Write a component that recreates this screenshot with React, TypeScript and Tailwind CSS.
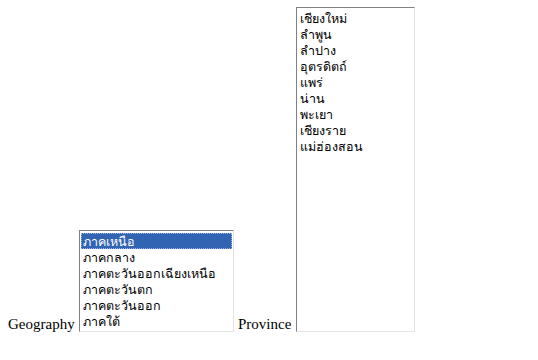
import React from 'react';

const regions = ['ภาคเหนือ', 'ภาคกลาง', 'ภาคตะวันออกเฉียงเหนือ', 'ภาคตะวันตก', 'ภาคตะวันออก', 'ภาคใต้'];

const provinces = ['เชียงใหม่', 'ลำพูน', 'ลำปาง', 'อุตรดิตถ์', 'แพร่', 'น่าน', 'พะเยา', 'เชียงราย', 'แม่ฮ่องสอน'];

const listFont = { fontFamily: 'Tahoma, "DejaVu Sans", "Noto Sans", sans-serif' };

const ListBox = ({ items, selected, className }: { items: string[]; selected?: number; className: string }) => (
  <div
    className={`bg-white border border-t-[#828282] border-l-[#828282] border-r-[#e3e3e3] border-b-[#e3e3e3] pt-[2px] px-[1px] overflow-hidden ${className}`}
    style={listFont}
  >
    {items.map((item, i) => (
      <div
        key={item}
        className={`h-[16px] leading-[17px] text-[12.5px] px-[2px] whitespace-nowrap ${
          i === selected ? 'bg-[#3264b4] text-white outline-1 outline-dotted outline-[#9db4e0] -outline-offset-1' : 'text-black'
        }`}
      >
        {item}
      </div>
    ))}
  </div>
);

export default function App() {
  return (
    <div className="w-[538px] h-[360px] bg-white pl-2 pt-[7px]">
      <div className="flex items-end text-[15px] text-black" style={{ fontFamily: '"Liberation Serif", serif' }}>
        <span className="leading-[18px] w-[67px] mr-[4px] mb-[-1px] whitespace-nowrap">Geography</span>
        <ListBox items={regions} selected={0} className="w-[155px] h-[102px]" />
        <span className="leading-[18px] w-[53px] ml-[4px] mr-[5px] mb-[-1px] whitespace-nowrap">Province</span>
        <ListBox items={provinces} className="w-[119px] h-[325px]" />
      </div>
    </div>
  );
}
